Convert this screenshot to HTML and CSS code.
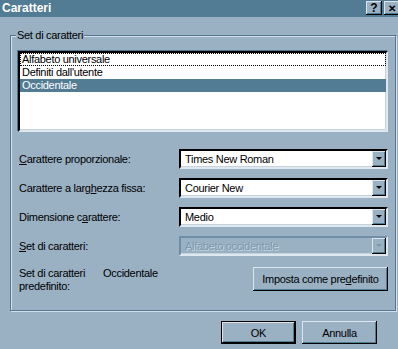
FILE: index.html
```html
<!DOCTYPE html>
<html lang="it">
<head>
    <meta charset="UTF-8">
    <title>Caratteri</title>
    <link rel="stylesheet" href="styles.css">
</head>
<body>
    <div class="titlebar">
        <span class="title">Caratteri</span>
        <div class="title-btns">
            <button class="tb-btn">?</button>
            <button class="tb-btn tb-close">&#x2715;</button>
        </div>
    </div>

    <fieldset class="group">
        <legend>Set di caratteri</legend>
        <div class="listbox">
            <div class="item focused">Alfabeto universale</div>
            <div class="item">Definiti dall'utente</div>
            <div class="item selected">Occidentale</div>
        </div>

        <div class="rows">
            <div class="row">
                <label class="lbl"><u>C</u>arattere proporzionale:</label>
                <div class="combo"><span class="combo-text">Times New Roman</span><span class="arrow"></span></div>
            </div>
            <div class="row">
                <label class="lbl">Carattere a larg<u>h</u>ezza fissa:</label>
                <div class="combo"><span class="combo-text">Courier New</span><span class="arrow"></span></div>
            </div>
            <div class="row">
                <label class="lbl">Dimensione c<u>a</u>rattere:</label>
                <div class="combo"><span class="combo-text">Medio</span><span class="arrow"></span></div>
            </div>
            <div class="row">
                <label class="lbl"><u>S</u>et di caratteri:</label>
                <div class="combo disabled"><span class="combo-text">Alfabeto occidentale</span><span class="arrow"></span></div>
            </div>
        </div>

        <div class="default-row">
            <div class="default-info">
                <span class="default-lbl">Set di caratteri predefinito:</span>
                <span class="default-val">Occidentale</span>
            </div>
            <button class="btn btn-wide">Imposta come pre<u>d</u>efinito</button>
        </div>
    </fieldset>

    <div class="actions">
        <button class="btn btn-default">OK</button>
        <button class="btn">Annulla</button>
    </div>
</body>
</html>
```

FILE: styles.css
```css
html, body {
    margin: 0;
    padding: 0;
}
body {
    width: 398px;
    height: 349px;
    overflow: hidden;
    background-color: #9ab0c3;
    font-family: 'Liberation Sans', Arial, sans-serif;
    font-size: 11px;
    line-height: 13px;
    letter-spacing: -0.3px;
    color: #000000;
}
button {
    font-family: inherit;
    font-size: 11px;
    letter-spacing: -0.3px;
    color: #000000;
    padding: 0;
    cursor: pointer;
}
u {
    text-decoration: underline;
    text-underline-offset: 1px;
}
.titlebar {
    height: 17px;
    background-color: #527b94;
    display: flex;
    justify-content: space-between;
    align-items: flex-start;
}
.title {
    color: #ffffff;
    font-weight: bold;
    font-size: 12px;
    letter-spacing: 0;
    line-height: 17px;
    padding-left: 2px;
}
.title-btns {
    display: flex;
    gap: 2px;
    margin-top: 1px;
    margin-right: -2px;
}
.tb-btn {
    width: 16px;
    height: 14px;
    background-color: #9ab0c3;
    border: none;
    box-shadow: inset -1px -1px 0 #000000, inset 1px 1px 0 #dbe5ee, inset -2px -2px 0 #527b94;
    font-weight: bold;
    font-size: 12px;
    line-height: 13px;
    letter-spacing: 0;
}
.tb-close {
    font-size: 10px;
}
.group {
    margin: 12px 2px 0 10px;
    padding: 9px 7px 19px 7px;
    border: 1px solid #52778f;
    box-shadow: 1px 1px 0 #d3e0ea, inset 1px 1px 0 #d3e0ea;
    min-width: 0;
}
.group legend {
    padding: 0 1px;
    margin-left: -2px;
    background-color: #9ab0c3;
    line-height: 13px;
}
.listbox {
    height: 77px;
    background-color: #ffffff;
    border-top: 2px solid #000000;
    border-left: 2px solid #000000;
    border-right: 2px solid #dfe8ef;
    border-bottom: 2px solid #dfe8ef;
    box-shadow: -1px -1px 0 #52778f, inset -1px -1px 0 #c6d4de;
}
.item {
    height: 13px;
    padding-left: 2px;
    white-space: nowrap;
}
.item.focused {
    outline: 1px dotted #000000;
    outline-offset: -1px;
}
.item.selected {
    background-color: #527b94;
    color: #ffffff;
}
.rows {
    margin-top: 17px;
    display: flex;
    flex-direction: column;
    gap: 9px;
}
.row {
    display: flex;
    align-items: center;
    height: 20px;
}
.lbl {
    width: 160px;
    padding-left: 1px;
    white-space: nowrap;
}
.combo {
    flex: 1;
    height: 16px;
    display: flex;
    align-items: stretch;
    background-color: #ffffff;
    border-top: 2px solid #000000;
    border-left: 2px solid #000000;
    border-right: 2px solid #dfe8ef;
    border-bottom: 2px solid #dfe8ef;
    box-shadow: inset -1px -1px 0 #c6d4de;
}
.combo-text {
    flex: 1;
    padding-left: 4px;
    line-height: 16px;
    white-space: nowrap;
}
.arrow {
    width: 14px;
    background-color: #9ab0c3;
    box-shadow: inset -1px -1px 0 #000000, inset 1px 1px 0 #dbe5ee, inset -2px -2px 0 #527b94;
    position: relative;
}
.arrow::after {
    content: "";
    position: absolute;
    left: 4px;
    top: 6px;
    border-left: 3px solid transparent;
    border-right: 3px solid transparent;
    border-top: 3px solid #000000;
}
.combo.disabled {
    background-color: #9ab0c3;
    border-top-color: #6f8ea5;
    border-left-color: #6f8ea5;
}
.combo.disabled .combo-text {
    color: #7a98ae;
    text-shadow: 1px 1px 0 #c8d7e2;
}
.combo.disabled .arrow::after {
    border-top-color: #7a98ae;
}
.default-row {
    margin-top: 11px;
    height: 24px;
    display: flex;
    justify-content: space-between;
    align-items: flex-start;
}
.default-info {
    display: flex;
    padding-left: 1px;
}
.default-lbl {
    width: 84px;
}
.btn {
    height: 23px;
    width: 75px;
    background-color: #9ab0c3;
    border: none;
    box-shadow: inset -1px -1px 0 #000000, inset 1px 1px 0 #dbe5ee, inset -2px -2px 0 #527b94;
}
.btn-wide {
    width: 135px;
    height: 24px;
}
.actions {
    margin-top: 10px;
    padding-right: 21px;
    display: flex;
    justify-content: flex-end;
    gap: 6px;
}
.btn-default {
    box-shadow: inset 0 0 0 1px #000000, inset -2px -2px 0 #000000, inset 2px 2px 0 #dbe5ee, inset -3px -3px 0 #527b94;
}
```
